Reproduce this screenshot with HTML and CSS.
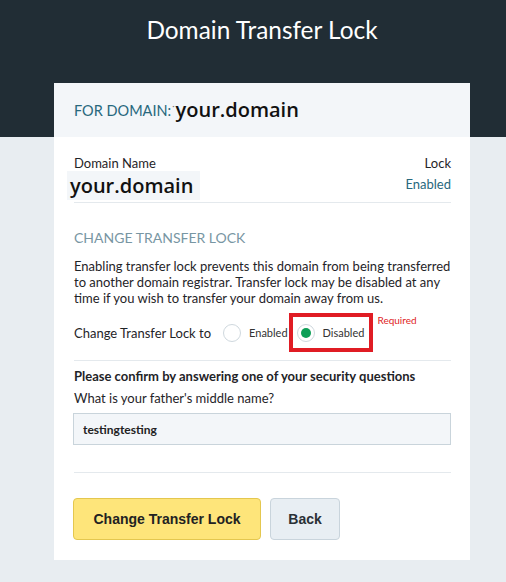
FILE: index.html
```html
<!DOCTYPE html>
<html lang="en">
<head>
    <meta charset="UTF-8">
    <meta name="viewport" content="width=device-width, initial-scale=1.0">
    <title>Domain Transfer Lock</title>
    <link rel="stylesheet" href="styles.css">
</head>
<body>
    <div class="top">
        <h1>Domain Transfer Lock</h1>
    </div>
    <div class="card">
        <div class="card-head">
            <span class="for-label">FOR DOMAIN:</span>
            <span class="dot">·</span>
            <span class="domain-big">your.domain</span>
        </div>
        <div class="card-body">
            <div class="info-row">
                <div>
                    <div class="label">Domain Name</div>
                    <div class="domain-box">your.domain</div>
                </div>
                <div class="lock-col">
                    <div class="label">Lock</div>
                    <div class="status">Enabled</div>
                </div>
            </div>
            <hr>
            <h2>CHANGE TRANSFER LOCK</h2>
            <p class="desc">Enabling transfer lock prevents this domain from being transferred to another domain registrar. Transfer lock may be disabled at any time if you wish to transfer your domain away from us.</p>
            <div class="radio-row">
                <span class="radio-label">Change Transfer Lock to</span>
                <label class="option">
                    <span class="radio"></span>
                    <span>Enabled</span>
                </label>
                <label class="option highlight">
                    <span class="radio checked"></span>
                    <span>Disabled</span>
                </label>
                <span class="required">Required</span>
            </div>
            <hr>
            <div class="confirm">Please confirm by answering one of your security questions</div>
            <div class="question">What is your father's middle name?</div>
            <input class="answer" type="text" value="testingtesting">
            <hr class="gap">
            <div class="buttons">
                <button class="btn-primary">Change Transfer Lock</button>
                <button class="btn-back">Back</button>
            </div>
        </div>
    </div>
</body>
</html>
```

FILE: styles.css
```css
body{
    margin: 0;
    background-color: #e8edf1;
    font-family: "Lato", "Liberation Sans", sans-serif;
    color: #1f2428;
}
.top{
    background-color: #212d35;
    height: 137px;
    text-align: center;
}
.top h1{
    margin: 0;
    padding: 14px 0 0 18px;
    font-size: 24.4px;
    font-weight: 400;
    line-height: 32px;
    color: #ffffff;
}
.card{
    width: 416px;
    margin: -54px 0 0 calc(50% - 199px);
    background-color: #ffffff;
    padding-bottom: 20px;
}
.card-head{
    height: 54px;
    background-color: #f3f6f9;
    display: flex;
    align-items: center;
    padding: 0 20px;
}
.for-label{
    font-size: 14.5px;
    color: #28687d;
}
.dot{
    font-size: 9px;
    color: #777;
    margin: -10px 1px 0 1px;
}
.domain-big{
    font-family: "Open Sans", sans-serif;
    font-size: 20px;
    font-weight: 600;
    color: #111;
    margin-top: -2px;
}
.card-body{
    padding: 18px 19px 0 20px;
}
.info-row{
    display: flex;
    justify-content: space-between;
}
.label{
    font-size: 13px;
    line-height: 16px;
    color: #1f2428;
}
.domain-box{
    margin-left: -7px;
    padding: 0 7px 0 3px;
    background-color: #f3f6f9;
    font-family: "Open Sans", sans-serif;
    font-size: 20px;
    font-weight: 600;
    line-height: 29px;
    color: #111;
}
.lock-col{
    text-align: right;
}
.status{
    margin-top: 5px;
    font-size: 13px;
    color: #28687d;
}
hr{
    border: none;
    border-top: 1px solid #e4e9ed;
    margin: 2px 0 0;
}
h2{
    margin: 25px 0 0;
    font-size: 14px;
    font-weight: 400;
    line-height: 20px;
    color: #7896a3;
}
.desc{
    margin: 10px 0 0;
    font-size: 13px;
    line-height: 16px;
}
.radio-row{
    display: flex;
    align-items: center;
    margin-top: 7px;
    margin-bottom: 8px;
}
.radio-label{
    font-size: 13px;
    margin-right: 12px;
}
.option{
    display: flex;
    align-items: center;
    gap: 8px;
    font-size: 11px;
    color: #333;
    height: 39px;
}
.highlight{
    border: 4px solid #e01c24;
    padding: 0 5px 0 4px;
    margin-left: 1px;
    box-sizing: border-box;
}
.radio{
    width: 18px;
    height: 18px;
    border: 1px solid #cfd8de;
    border-radius: 50%;
    box-sizing: border-box;
    display: grid;
    place-items: center;
    background-color: #fff;
}
.radio.checked::after{
    content: "";
    width: 10px;
    height: 10px;
    border-radius: 50%;
    background-color: #0e9f57;
}
.required{
    align-self: flex-start;
    margin-left: 4px;
    margin-top: 1px;
    font-size: 10px;
    color: #e01c24;
}
.confirm{
    margin-top: 7px;
    font-size: 13px;
    font-weight: 700;
    line-height: 16px;
}
.question{
    margin-top: 6px;
    font-size: 13px;
    line-height: 16px;
}
.answer{
    display: block;
    box-sizing: border-box;
    width: 378px;
    height: 32px;
    margin: 7px 0 0 -1px;
    padding: 0 9px;
    border: 1px solid #c9d4db;
    background-color: #f3f6f9;
    font-family: "Lato", sans-serif;
    font-size: 12px;
    font-weight: 700;
    color: #222;
}
hr.gap{
    margin-top: 27px;
}
.buttons{
    display: flex;
    gap: 9px;
    margin-top: 25px;
    margin-left: -1px;
}
.buttons button{
    height: 42px;
    border-radius: 4px;
    font-family: "Liberation Sans", Arial, sans-serif;
    font-size: 14px;
    font-weight: 700;
    cursor: pointer;
}
.btn-primary{
    width: 188px;
    background-color: #fee57a;
    border: 1px solid #e4c74f;
    color: #222;
}
.btn-back{
    width: 70px;
    background-color: #e8eef3;
    border: 1px solid #c9d4dc;
    color: #2a3036;
}
```
